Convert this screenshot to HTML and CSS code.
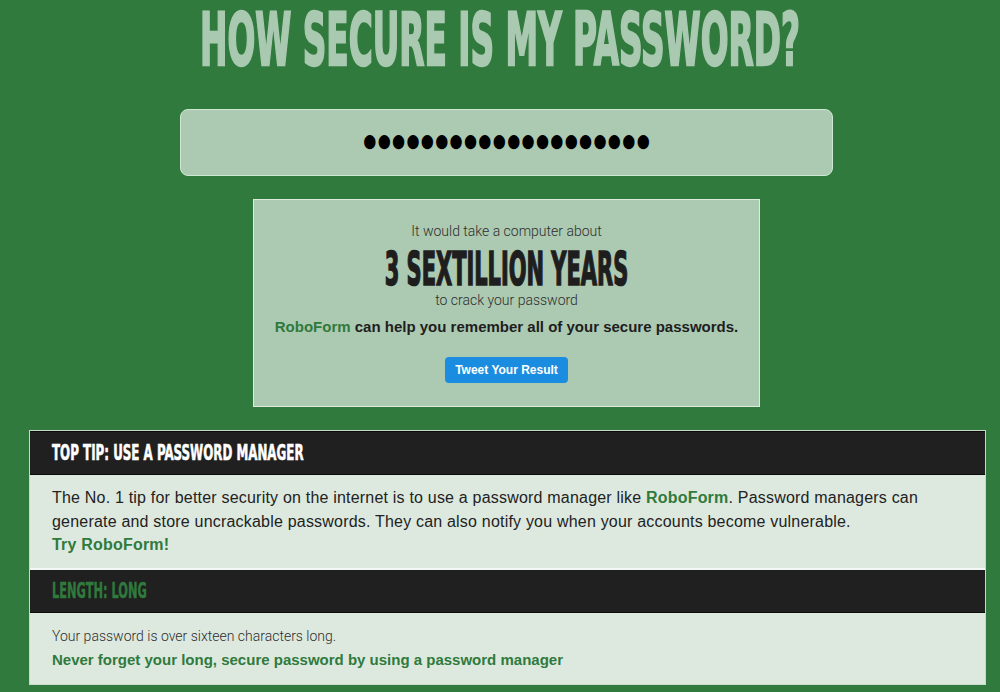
FILE: index.html
```html
<!DOCTYPE html>
<html>
<head>
<meta charset="utf-8">
<link rel="stylesheet" href="styles.css">
</head>
<body>
<div class="page">
  <h1 class="title"><span class="cond">HOW SECURE IS MY PASSWORD?</span></h1>
  <div class="pw-field"><span class="dots">●●●●●●●●●●●●●●●●●●●●</span></div>
  <div class="result">
    <p class="result-pre">It would take a computer about</p>
    <p class="result-time"><span class="cond">3 SEXTILLION YEARS</span></p>
    <p class="result-post">to crack your password</p>
    <p class="result-promo"><a class="green" href="#">RoboForm</a> can help you remember all of your secure passwords.</p>
    <a class="tweet" href="#">Tweet Your Result</a>
  </div>
  <div class="tips">
    <div class="tip-head"><span class="cond">TOP TIP: USE A PASSWORD MANAGER</span></div>
    <div class="tip-body tip-main">
      <p>The No. 1 tip for better security on the internet is to use a password manager like <a class="green" href="#">RoboForm</a>. Password managers can generate and store uncrackable passwords. They can also notify you when your accounts become vulnerable.</p>
      <a class="green" href="#">Try RoboForm!</a>
    </div>
    <div class="tip-head tip-head-green"><span class="cond">LENGTH: LONG</span></div>
    <div class="tip-body tip-small">
      <p class="light">Your password is over sixteen characters long.</p>
      <a class="green" href="#">Never forget your long, secure password by using a password manager</a>
    </div>
  </div>
</div>
</body>
</html>
```

FILE: styles.css
```css
html, body {
  margin: 0;
  padding: 0;
  background: #317a3e;
}
body {
  font-family: "Liberation Sans", Arial, sans-serif;
  color: #222;
  height: 692px;
  overflow: hidden;
}
.cond {
  display: inline-block;
  font-family: "DejaVu Sans Condensed", "DejaVu Sans", sans-serif;
  font-weight: bold;
  white-space: nowrap;
}
.title {
  margin: 0;
  height: 82px;
  display: flex;
  justify-content: center;
  align-items: center;
  color: #a9c9b0;
  font-size: 36.4px;
  line-height: 1;
}
.title .cond {
  line-height: 0.8;
  transform: scaleY(1.98);
  -webkit-text-stroke: 1.2px #a9c9b0;
}
.pw-field {
  box-sizing: border-box;
  width: 653px;
  height: 67px;
  margin: 27px 0 0 180px;
  padding-bottom: 4px;
  background: #acc9b2;
  border: 1px solid #cfe8d3;
  border-radius: 8px;
  display: flex;
  align-items: center;
  justify-content: center;
}
.dots {
  display: inline-block;
  font-family: "DejaVu Sans", sans-serif;
  font-size: 15px;
  letter-spacing: 1.3px;
  padding-left: 1.3px;
  color: #000;
  transform: scaleY(1.25);
}
.result {
  box-sizing: border-box;
  width: 507px;
  height: 208px;
  margin: 23px 0 0 253px;
  background: #acc9b2;
  border: 1px solid #dcebdd;
  text-align: center;
  padding-top: 22px;
}
.result p {
  margin: 0;
}
.result-pre, .result-post {
  font-family: Roboto, "Liberation Sans", sans-serif;
  font-weight: 300;
  font-size: 14px;
  line-height: 18px;
  color: #2e2e2e;
}
.result .result-time {
  margin-top: 8px;
  height: 43px;
  display: flex;
  justify-content: center;
  align-items: center;
  font-size: 23.3px;
  line-height: 1;
  color: #1e1e1e;
}
.result-time .cond {
  line-height: 0.8;
  transform: scaleY(2.02);
  -webkit-text-stroke: 0.8px #1e1e1e;
}
.result .result-promo {
  margin-top: 9px;
  font-size: 15px;
  font-weight: bold;
  line-height: 18px;
  color: #1e1e1e;
}
.green {
  color: #2f7a3c;
  font-weight: bold;
  text-decoration: none;
}
.tweet {
  display: block;
  margin: 21px auto 0;
  background: #1b8de0;
  color: #fff;
  font-size: 12px;
  font-weight: bold;
  text-decoration: none;
  width: 123px;
  height: 26px;
  line-height: 26px;
  border-radius: 4px;
}
.tips {
  box-sizing: border-box;
  width: 957px;
  margin: 23px 0 0 29px;
  border: 1px solid #c8d9cb;
  background: #dde9df;
}
.tip-head {
  box-sizing: border-box;
  height: 44px;
  background: #202020;
  border-top: 1px solid #0c0c0c;
  border-bottom: 1px solid #0c0c0c;
  padding-left: 22px;
  color: #fff;
  font-size: 22px;
  line-height: 42px;
}
.tip-head .cond {
  transform-origin: left center;
  transform: scaleX(0.6);
  -webkit-text-stroke: 0.6px #fff;
}
.tip-head-green {
  height: 45px;
  border-top: 2px solid #f4f8f4;
  color: #2f7a3c;
}
.tip-head-green .cond {
  transform: scaleX(0.575);
  -webkit-text-stroke: 0.4px #2f7a3c;
}
.tip-body {
  box-sizing: border-box;
  padding: 0 22px;
  color: #222;
}
.tip-body p {
  margin: 0;
}
.tip-main {
  height: 93px;
  padding-top: 11px;
  font-size: 16px;
  line-height: 23.5px;
  letter-spacing: 0.2px;
}
.tip-small {
  height: 71px;
  padding-top: 12px;
  font-size: 14px;
  line-height: 23px;
}
.tip-small .green {
  font-size: 15px;
}
.light {
  font-family: Roboto, "Liberation Sans", sans-serif;
  font-weight: 300;
  color: #2e2e2e;
}
```
